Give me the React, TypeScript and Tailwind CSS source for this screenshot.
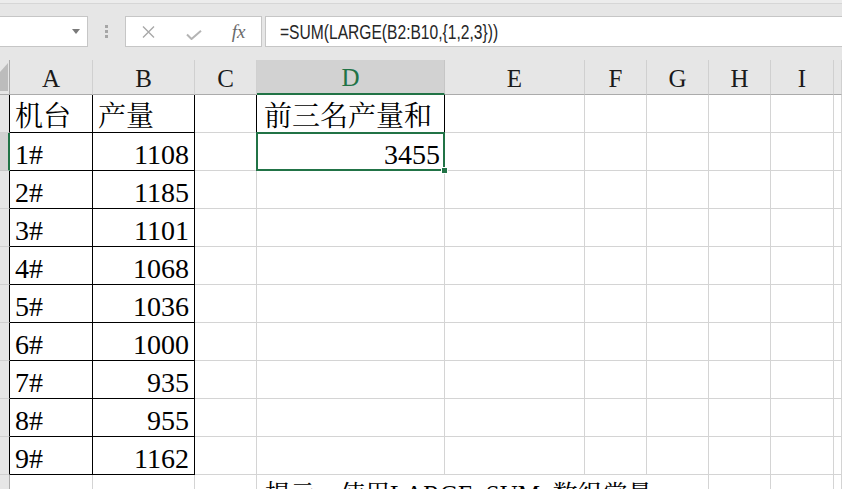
import type { ReactNode } from 'react'

// 表格数据 — 机台产量
const ROWS: [string, number][] = [
  ['1#', 1108],
  ['2#', 1185],
  ['3#', 1101],
  ['4#', 1068],
  ['5#', 1036],
  ['6#', 1000],
  ['7#', 935],
  ['8#', 955],
  ['9#', 1162],
]

const LETTERS = ['A', 'B', 'C', 'D', 'E', 'F', 'G', 'H', 'I', '']

const GRID = 'grid grid-cols-[10px_83px_102px_62px_188px_140px_62px_62px_62px_63px_1fr]'
const CELL_FONT = "font-['Liberation_Serif','Noto_Serif_CJK_SC','Noto_Sans_CJK_SC',serif]"

function FormulaBar() {
  return (
    <div className="h-[60px] bg-[#e6e6e6]">
      <div className="h-[4px] border-b border-[#d6d6d6] bg-[#ececec]" />
      <div className="flex h-[31px] items-stretch mt-[12px]">
        {/* 名称框 */}
        <div className="relative w-[88px] border border-l-0 border-[#c6c6c6] bg-white">
          <svg className="absolute right-[7px] top-[12px]" width="8" height="5" viewBox="0 0 8 5">
            <path d="M0 0h8L4 5z" fill="#7a7a7a" />
          </svg>
        </div>

        {/* 分隔点 */}
        <div className="flex w-[37px] flex-col items-center justify-center gap-[2px]">
          <span className="h-[3px] w-[3px] bg-[#a6a6a6]" />
          <span className="h-[3px] w-[3px] bg-[#a6a6a6]" />
          <span className="h-[3px] w-[3px] bg-[#a6a6a6]" />
        </div>

        {/* 取消 / 确认 / fx */}
        <div className="flex w-[137px] items-center border border-[#c6c6c6] bg-white">
          <div className="flex w-[45px] justify-center">
            <svg width="13" height="12" viewBox="0 0 13 12">
              <path d="M1 0.5l11 11M12 0.5l-11 11" stroke="#a8a8a8" strokeWidth="1.4" fill="none" />
            </svg>
          </div>
          <div className="flex w-[45px] justify-center pt-[6px]">
            <svg width="16" height="10" viewBox="0 0 16 10">
              <path d="M1 4.5l4.5 4.5L15 0.8" stroke="#b4b4b4" strokeWidth="2" fill="none" />
            </svg>
          </div>
          <div className="flex w-[45px] justify-center">
            <span className="font-['Liberation_Serif',serif] text-[19px] italic leading-none text-[#6a6a6a]">
              fx
            </span>
          </div>
        </div>

        {/* 编辑栏 */}
        <div className="ml-[3px] flex flex-1 items-center border border-r-0 border-[#c6c6c6] bg-white pl-[14px]">
          <span className="origin-left scale-x-[0.78] whitespace-nowrap font-['Liberation_Sans',sans-serif] text-[20px] leading-none text-[#262626]">
            =SUM(LARGE(B2:B10,{'{'}1,2,3{'}'}))
          </span>
        </div>
      </div>
    </div>
  )
}

function ColumnHeader() {
  return (
    <div className={`${GRID} h-[35px] bg-[#e6e6e6]`}>
      <div className="relative border-r border-b border-[#ababab]">
        <svg className="absolute left-0 top-0" width="10" height="34" viewBox="0 0 10 34">
          <polygon points="8,3 8,31 0,31 0,12" fill="#bcbcbc" />
        </svg>
      </div>
      {LETTERS.map((l) =>
        l === 'D' ? (
          <div
            key={l}
            className={`flex items-center justify-center border-r border-b-2 border-r-[#c6c6c6] border-b-[#217346] bg-[#d2d2d2] pt-[3px] ${CELL_FONT} text-[25px] text-[#217346]`}
          >
            {l}
          </div>
        ) : (
          <div
            key={l || 'J'}
            className={`flex items-center justify-center border-r border-b border-r-[#d0d0d0] border-b-[#ababab] pt-[3px] ${CELL_FONT} text-[25px] text-[#1a1a1a]`}
          >
            {l}
          </div>
        ),
      )}
    </div>
  )
}

function Cell({
  children,
  className = '',
}: {
  children?: ReactNode
  className?: string
}) {
  return (
    <div className={`relative flex h-[38px] items-end border-r border-b ${className}`}>
      {children}
    </div>
  )
}

function Sheet() {
  const rows = Array.from({ length: 11 }, (_, r) => r)

  return (
    <div className={`${CELL_FONT} text-[28px] leading-[30px] text-black`}>
      <ColumnHeader />
      {rows.map((r) => {
        const inTable = r <= 9
        const selected = r === 1
        const data = r >= 1 && r <= 9 ? ROWS[r - 1] : null

        return (
          <div key={r} className={GRID}>
            {/* 行号 */}
            <div
              className={
                selected
                  ? 'h-[38px] border-b border-r-2 border-b-[#c6c6c6] border-r-[#217346] bg-[#d2d2d2]'
                  : `h-[38px] border-b border-r border-b-[#d0d0d0] bg-[#e6e6e6] ${
                      inTable ? 'border-r-black' : 'border-r-[#ababab]'
                    }`
              }
            />

            {/* A */}
            <Cell className={inTable ? 'border-black pl-[5px]' : 'border-[#d4d4d4]'}>
              {r === 0 ? '机台' : data ? data[0] : null}
            </Cell>

            {/* B */}
            <Cell className={inTable ? 'justify-end border-black pr-[5px]' : 'border-[#d4d4d4]'}>
              {r === 0 ? <span className="mr-auto pl-[5px]">产量</span> : data ? data[1] : null}
            </Cell>

            {/* C */}
            <Cell className={r <= 1 ? 'border-r-black border-b-[#d4d4d4]' : 'border-[#d4d4d4]'} />

            {/* D */}
            {r === 0 && <Cell className="border-black pl-[7px]">前三名产量和</Cell>}
            {r === 1 && (
              <Cell className="justify-end border-black pr-[4px]">
                3455
                <div className="absolute -inset-px z-10 border-2 border-[#217346]" />
                <div className="absolute -bottom-[4px] -right-[4px] z-20 h-[7px] w-[7px] border border-white bg-[#217346]" />
              </Cell>
            )}
            {r >= 2 && r <= 9 && <Cell className="border-[#d4d4d4]" />}
            {r === 10 && (
              <Cell className="items-start overflow-visible whitespace-nowrap border-r-transparent border-b-[#d4d4d4] pl-[8px] pt-[6px] text-[25px] leading-[28px]">
                提示：使用LARGE, SUM, 数组常量
              </Cell>
            )}

            {/* E ~ J */}
            <Cell className={r === 10 ? 'border-r-transparent border-b-[#d4d4d4]' : 'border-[#d4d4d4]'} />
            <Cell className={r === 10 ? 'border-r-transparent border-b-[#d4d4d4]' : 'border-[#d4d4d4]'} />
            <Cell className="border-[#d4d4d4]" />
            <Cell className="border-[#d4d4d4]" />
            <Cell className="border-[#d4d4d4]" />
            <Cell className="border-[#d4d4d4]" />
          </div>
        )
      })}
    </div>
  )
}

export default function App() {
  return (
    <div className="h-[489px] w-[842px] overflow-hidden bg-white">
      <FormulaBar />
      <Sheet />
    </div>
  )
}
